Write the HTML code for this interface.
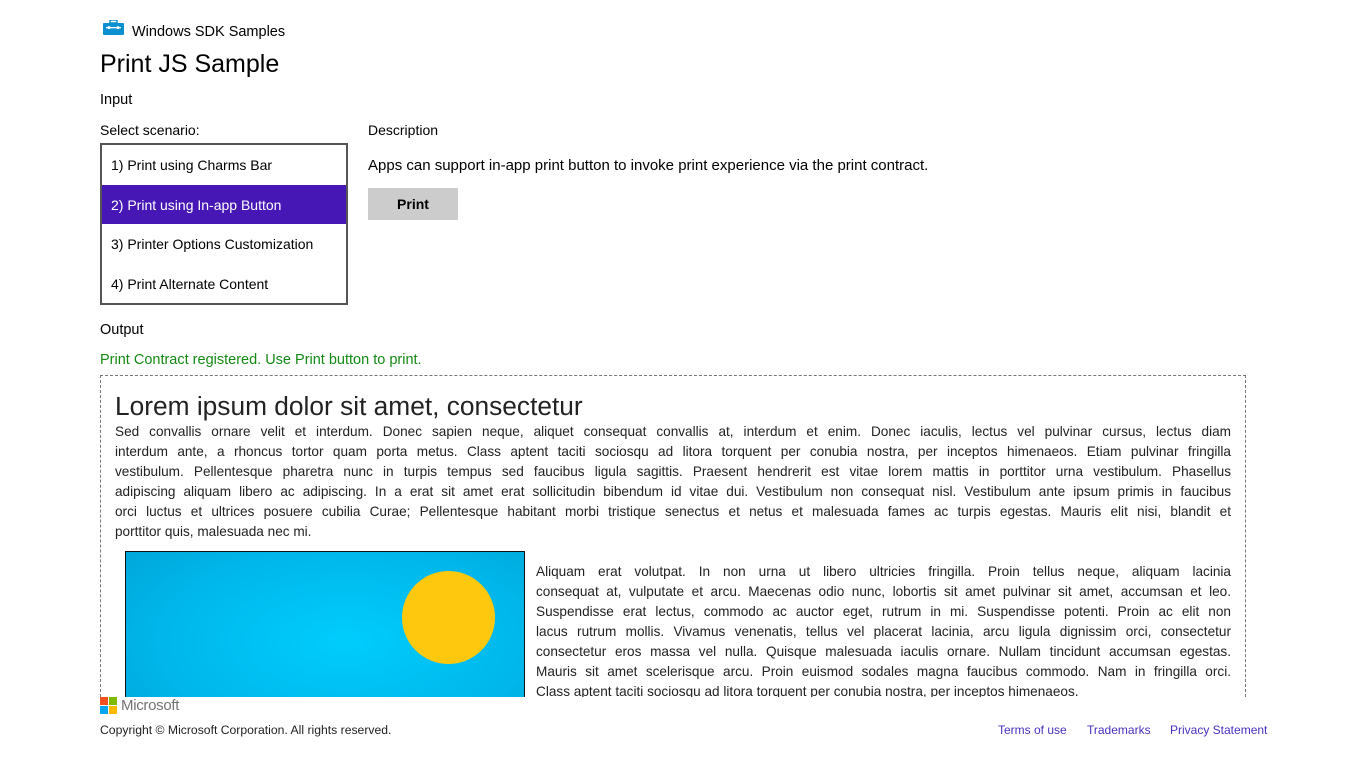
<!DOCTYPE html>
<html><head><meta charset="utf-8"><style>
body{margin:0;width:1366px;height:768px;overflow:hidden;background:#fff;font-family:"Liberation Sans",sans-serif;color:#000;position:relative}
.a{position:absolute}
.list{left:100px;top:143px;width:244px;height:158px;border:2px solid #555}
.list div{height:39.5px;line-height:40px;padding-left:9px;font-size:14px}
.sel{background:#4617b4;color:#fff}
.out{left:100px;top:375px;width:1144px;height:321px;border:1px dashed #777;border-bottom:none;overflow:hidden}
.p{font-size:13.6px;line-height:20px;color:#222}
.p div{text-align:justify;text-align-last:justify;white-space:nowrap;height:20px}
.p div.l{text-align-last:left}
</style></head><body>
<svg class="a" style="left:103px;top:20px" width="21" height="15" viewBox="0 0 21 15"><rect x="7" y="0" width="7" height="3" fill="none" stroke="#0a8fd1" stroke-width="1.5"/><rect x="0" y="3" width="21" height="12" rx="1" fill="#0a8fd1"/><rect x="3" y="7" width="15" height="1.3" fill="#fff"/><circle cx="6" cy="7.6" r="1.5" fill="#fff"/><circle cx="15" cy="7.6" r="1.5" fill="#fff"/></svg>
<div class="a" style="left:132px;top:24px;font-size:14.5px">Windows SDK Samples</div>
<div class="a" style="left:100px;top:50px;font-size:25px">Print JS Sample</div>
<div class="a" style="left:100px;top:92px;font-size:14.5px">Input</div>
<div class="a" style="left:100px;top:122px;font-size:14px">Select scenario:</div>
<div class="a list"><div>1) Print using Charms Bar</div><div class="sel">2) Print using In-app Button</div><div>3) Printer Options Customization</div><div>4) Print Alternate Content</div></div>
<div class="a" style="left:368px;top:122px;font-size:14px">Description</div>
<div class="a" style="left:368px;top:157px;font-size:15px">Apps can support in-app print button to invoke print experience via the print contract.</div>
<div class="a" style="left:368px;top:188px;width:90px;height:32px;background:#ccc;font-size:14px;font-weight:bold;text-align:center;line-height:33px">Print</div>
<div class="a" style="left:100px;top:322px;font-size:14.5px">Output</div>
<div class="a" style="left:100px;top:352px;font-size:14.5px;color:#138a13">Print Contract registered. Use Print button to print.</div>
<div class="a out">
<div style="position:absolute;left:14px;top:15px;font-size:26.3px;color:#222">Lorem ipsum dolor sit amet, consectetur</div>
<div class="p" style="position:absolute;left:14px;top:46px;width:1116px">
<div>Sed convallis ornare velit et interdum. Donec sapien neque, aliquet consequat convallis at, interdum et enim. Donec iaculis, lectus vel pulvinar cursus, lectus diam</div>
<div>interdum ante, a rhoncus tortor quam porta metus. Class aptent taciti sociosqu ad litora torquent per conubia nostra, per inceptos himenaeos. Etiam pulvinar fringilla</div>
<div>vestibulum. Pellentesque pharetra nunc in turpis tempus sed faucibus ligula sagittis. Praesent hendrerit est vitae lorem mattis in porttitor urna vestibulum. Phasellus</div>
<div>adipiscing aliquam libero ac adipiscing. In a erat sit amet erat sollicitudin bibendum id vitae dui. Vestibulum non consequat nisl. Vestibulum ante ipsum primis in faucibus</div>
<div>orci luctus et ultrices posuere cubilia Curae; Pellentesque habitant morbi tristique senectus et netus et malesuada fames ac turpis egestas. Mauris elit nisi, blandit et</div>
<div class="l">porttitor quis, malesuada nec mi.</div>
</div>
<div style="position:absolute;left:24px;top:175px;width:398px;height:200px;border:1px solid #111;background:radial-gradient(ellipse at 55% 45%,#00cdfd,#00b6ea 60%,#00a3d6)"><div style="position:absolute;left:276px;top:19px;width:93px;height:93px;border-radius:50%;background:#fec80e"></div></div>
<div class="p" style="position:absolute;left:435px;top:186px;width:695px">
<div>Aliquam erat volutpat. In non urna ut libero ultricies fringilla. Proin tellus neque, aliquam lacinia</div>
<div>consequat at, vulputate et arcu. Maecenas odio nunc, lobortis sit amet pulvinar sit amet, accumsan et leo.</div>
<div>Suspendisse erat lectus, commodo ac auctor eget, rutrum in mi. Suspendisse potenti. Proin ac elit non</div>
<div>lacus rutrum mollis. Vivamus venenatis, tellus vel placerat lacinia, arcu ligula dignissim orci, consectetur</div>
<div>consectetur eros massa vel nulla. Quisque malesuada iaculis ornare. Nullam tincidunt accumsan egestas.</div>
<div>Mauris sit amet scelerisque arcu. Proin euismod sodales magna faucibus commodo. Nam in fringilla orci.</div>
<div class="l">Class aptent taciti sociosqu ad litora torquent per conubia nostra, per inceptos himenaeos.</div>
</div>
</div>
<div class="a" style="left:100px;top:697px;width:8px;height:8px;background:#f25022"></div>
<div class="a" style="left:109px;top:697px;width:8px;height:8px;background:#7fba00"></div>
<div class="a" style="left:100px;top:706px;width:8px;height:8px;background:#00a4ef"></div>
<div class="a" style="left:109px;top:706px;width:8px;height:8px;background:#ffb900"></div>
<div class="a" style="left:121px;top:697px;font-size:15px;color:#737373;letter-spacing:-0.3px">Microsoft</div>
<div class="a" style="left:100px;top:723px;font-size:12.2px;color:#222">Copyright © Microsoft Corporation. All rights reserved.</div>
<div class="a" style="left:998px;top:723px;font-size:12px;color:#4a2fc0">Terms of use</div>
<div class="a" style="left:1087px;top:723px;font-size:12px;color:#4a2fc0">Trademarks</div>
<div class="a" style="left:1170px;top:723px;font-size:12px;color:#4a2fc0">Privacy Statement</div>
</body></html>
